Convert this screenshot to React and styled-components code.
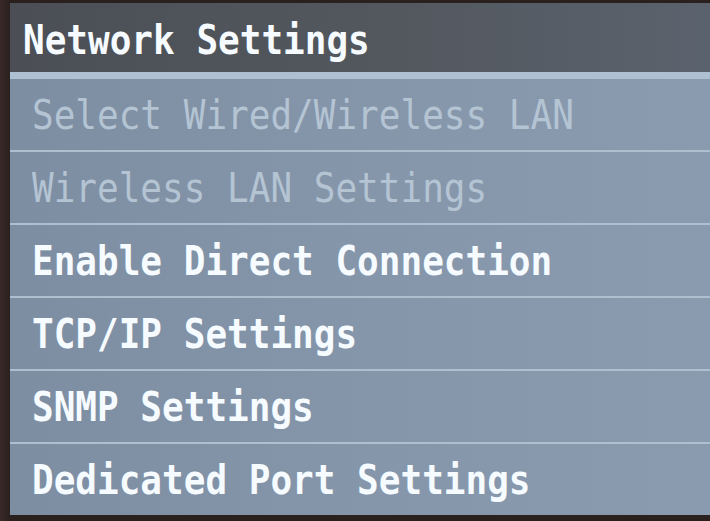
import React from 'react';
import styled, { createGlobalStyle } from 'styled-components';

const items = [
  { label: 'Select Wired/Wireless LAN', disabled: true },
  { label: 'Wireless LAN Settings', disabled: true },
  { label: 'Enable Direct Connection' },
  { label: 'TCP/IP Settings' },
  { label: 'SNMP Settings' },
  { label: 'Dedicated Port Settings' },
];

function App() {
  return (
    <>
      <GlobalStyle />
      <Bezel>
        <Screen>
          <Header>
            <Label $bold>Network Settings</Label>
          </Header>
          <HeaderRule />
          <MenuList>
            {items.map((item, i) => (
              <MenuRow key={item.label} $first={i === 0}>
                <Label $bold={!item.disabled} $disabled={item.disabled}>
                  {item.label}
                </Label>
              </MenuRow>
            ))}
          </MenuList>
        </Screen>
      </Bezel>
    </>
  );
}

const GlobalStyle = createGlobalStyle`
  html, body {
    margin: 0;
    padding: 0;
    background: #2a201f;
  }
`;

const Bezel = styled.div`
  width: 710px;
  height: 521px;
  box-sizing: border-box;
  padding: 3px 0 6px 10px;
  background: linear-gradient(90deg, #3a2a27 0px, #2a201e 10px);
  overflow: hidden;
`;

const Screen = styled.div`
  display: flex;
  flex-direction: column;
  height: 100%;
  font-family: "DejaVu Sans Mono", "Liberation Mono", monospace;
`;

const Header = styled.div`
  height: 70px;
  box-sizing: border-box;
  display: flex;
  align-items: center;
  padding: 5px 0 0 13px;
  background: linear-gradient(90deg, #4b4e55 0%, #53585f 55%, #5a626d 100%);
`;

const HeaderRule = styled.div`
  height: 7px;
  background: #adc1d3;
`;

const MenuList = styled.div`
  flex: 1;
  display: flex;
  flex-direction: column;
  background: linear-gradient(90deg, #7d8da2 0%, #8596ab 50%, #8a9bb0 100%);
`;

const MenuRow = styled.div`
  height: 71px;
  display: flex;
  align-items: center;
  padding-left: 22px;
  border-top: ${(p) => (p.$first ? 'none' : '2px solid #aebfd0')};
`;

const Label = styled.span`
  display: inline-block;
  font-size: 36px;
  line-height: 1;
  white-space: nowrap;
  font-weight: ${(p) => (p.$bold ? 'bold' : 'normal')};
  color: ${(p) => (p.$disabled ? '#b4c4d3' : '#f5fbff')};
  transform: scaleY(1.15);
  transform-origin: center;
`;

export default App;
